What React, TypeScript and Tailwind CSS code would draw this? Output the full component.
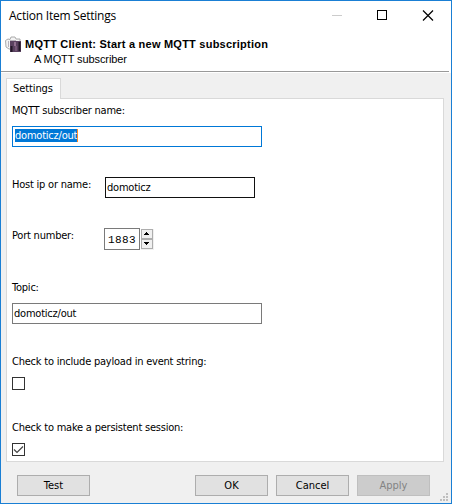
import type { ReactNode } from "react";

const ui = "font-['DejaVu_Sans_Condensed','DejaVu_Sans',sans-serif] font-stretch-condensed text-[11px] leading-[14px] whitespace-nowrap";

function Label({ children, className = "" }: { children: ReactNode; className?: string }) {
  return <div className={`${ui} h-[14px] tracking-[-0.22px] text-black ${className}`}>{children}</div>;
}

function Button({ children, className = "border-[#adadad] bg-[#e1e1e1] text-black" }: { children: ReactNode; className?: string }) {
  return (
    <button className={`${ui} flex h-[21px] w-[73px] items-center justify-center border pt-px ${className}`}>
      {children}
    </button>
  );
}

function Checkbox({ checked = false }: { checked?: boolean }) {
  return (
    <div className="mt-[8px] h-[13px] w-[13px] border border-[#333333] bg-white">
      {checked && (
        <svg width="11" height="11" viewBox="0 0 11 11" fill="none" stroke="#444" strokeWidth="1.2">
          <path d="M1 5.5 4 8.5 10 2.5" />
        </svg>
      )}
    </div>
  );
}

export default function App() {
  return (
    <div className="flex h-[504px] w-[452px] flex-col border border-[#1a7fd4] bg-[#f0f0f0] text-black">
      <header className="h-[72px] bg-white">
        <div className="flex h-[29px] items-center justify-between pl-2">
          <span className="pt-px font-['Open_Sans',sans-serif] text-[12px] leading-4 tracking-[-0.22px] whitespace-nowrap">Action Item Settings</span>
          <svg width="120" height="29" viewBox="0 0 120 29" fill="none" shapeRendering="crispEdges">
            <path d="M1 14.5h10" stroke="#ccc" />
            <rect x="46.5" y="9.5" width="9" height="9" stroke="#000" />
            <path d="m92 9.5 10 10m0-10-10 10" stroke="#000" strokeWidth="1.2" shapeRendering="auto" />
          </svg>
        </div>
        <div className="flex h-[41px] pt-[6px] pl-1">
          <svg width="17" height="17" viewBox="0 0 17 17" fill="none">
            <path d="M.5 4.5 3 3l2 .5L6 1h4l1 2h4v10H4l-3-2Z" fill="#f3f3f3" stroke="#aaa" />
            <path d="M5 5h11v11H5Z" fill="#5a4160" />
            <path d="M6.5 10v6M14.5 6v9" stroke="#221827" strokeWidth="2" />
            <path d="M9 6h2v4H9Z" fill="#927190" />
            <path d="M10 10h2v5h-2Z" fill="#765777" />
            <path d="M3.5 5v6M5 4.5h6" stroke="#b9b3bc" />
          </svg>
          <div className="ml-[3px] font-['Liberation_Sans',sans-serif] text-[11px] leading-[14px] whitespace-nowrap">
            <div className="mt-px font-bold tracking-[0.23px]">MQTT Client: Start a new MQTT subscription</div>
            <div className="mt-px pl-[9px] tracking-[-0.1px]">A MQTT subscriber</div>
          </div>
        </div>
        <div className="mr-[2px] h-px bg-[#999999]" />
        <div className="h-px bg-white" />
      </header>

      <main className="mt-[5px] ml-[5px] w-[438px]">
        <div className="relative z-10 -mb-px h-[21px] w-[55px] border border-b-0 border-[#d9d9d9] bg-white pt-[3px] pl-[6px]">
          <Label className="tracking-[-0.1px]!">Settings</Label>
        </div>
        <section className="flex h-[364px] flex-col border border-[#d9d9d9] bg-white pt-[5px] pl-[5px]">
          <Label>MQTT subscriber name:</Label>
          <div className="mt-[8px] h-[21px] w-[250px] border border-[#0078d7] px-[2px] pt-[2px]">
            <div className="h-[13px] w-[63px] border-r border-[#ff8728] bg-[#0078d7]">
              <Label className="text-white!">domoticz/out</Label>
            </div>
          </div>
          <div className="mt-[30px] flex h-[21px]">
            <Label className="w-[93px] pt-px">Host ip or name:</Label>
            <div className="h-[21px] w-[150px] border border-[#111111] pt-[3px] pl-[1px]">
              <Label>domoticz</Label>
            </div>
          </div>
          <div className="mt-[30px] flex h-[22px]">
            <Label className="w-[92px] pt-px">Port number:</Label>
            <div className="h-[22px] w-[36px] border border-[#7a7a7a] pt-[4px] pl-[3px] font-['Liberation_Mono',monospace] text-[11px] leading-[14px] tracking-[0.4px]">1883</div>
            <svg className="ml-px" width="13" height="22" viewBox="0 0 13 22" shapeRendering="crispEdges">
              <rect y="1" width="13" height="21" fill="#f0f0f0" />
              <path d="M.5 1.5h11v9H.5zM.5 11.5h11v9H.5z" fill="#f0f0f0" stroke="#adadad" />
              <path d="M5 4h1v1h1v1h1v1H3V6h1V5h1zM3 14h5v1H7v1H6v1H5v-1H4v-1H3z" />
            </svg>
          </div>
          <Label className="mt-[31px]">Topic:</Label>
          <div className="mt-[8px] h-[21px] w-[250px] border border-[#7a7a7a] pt-[3px] pl-[1px]">
            <Label>domoticz/out</Label>
          </div>
          <Label className="mt-[31px]">Check to include payload in event string:</Label>
          <Checkbox />
          <Label className="mt-[31px]">Check to make a persistent session:</Label>
          <Checkbox checked />
        </section>
      </main>

      <footer className="flex grow pt-[13px] pl-4">
        <Button>Test</Button>
        <div className="ml-[105px] flex gap-2">
          <Button>OK</Button>
          <Button>Cancel</Button>
          <Button className="border-[#bfbfbf] bg-[#cccccc] text-[#838383]">Apply</Button>
        </div>
        <svg className="mt-[18px] ml-[10px]" width="8" height="8" fill="#bfbfbf" shapeRendering="crispEdges">
          <path d="M6 0h2v2H6zM3 3h2v2H3zM6 3h2v2H6zM0 6h2v2H0zM3 6h2v2H3zM6 6h2v2H6z" />
        </svg>
      </footer>
    </div>
  );
}
